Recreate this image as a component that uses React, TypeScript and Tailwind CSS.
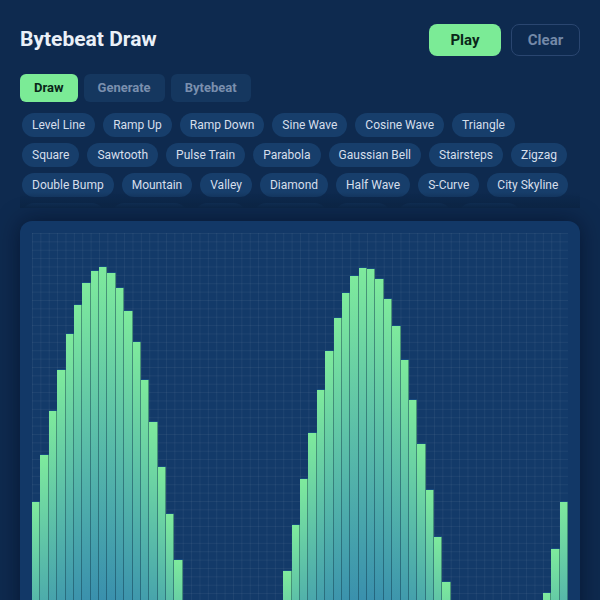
import React from 'react';

const PRESET_ROWS = [
  'Level Line', 'Ramp Up', 'Ramp Down', 'Sine Wave', 'Cosine Wave', 'Triangle',
  'Square', 'Sawtooth', 'Pulse Train', 'Parabola', 'Gaussian Bell', 'Stairsteps', 'Zigzag',
  'Double Bump', 'Mountain', 'Valley', 'Diamond', 'Half Wave', 'S-Curve', 'City Skyline',
  'Exponential', 'Logarithm', 'Noise', 'Heartbeat', 'Spikes', 'Ripple', 'Bounce',
];

const TABS = ['Draw', 'Generate', 'Bytebeat'];

// 64 samples, roughly two periods of a sine
const SAMPLES = Array.from({ length: 64 }, (_, i) => 0.5 + 0.438 * Math.sin((2 * Math.PI * i) / 31.5));

const App = () => {
  const active = 'Draw';

  return (
    <div className="h-screen overflow-hidden bg-[#0e2a4f] px-5 pt-6 font-['Roboto',sans-serif]">
      {/* header */}
      <div className="flex items-center justify-between">
        <h1 className="text-[21px] font-bold text-[#eaf0f8]">Bytebeat Draw</h1>
        <div className="flex gap-2.5">
          <button className="h-8 w-[72px] rounded-lg bg-[#7beb96] text-[15px] font-bold text-[#0a2618]">
            Play
          </button>
          <button className="h-8 w-[69px] rounded-lg border border-[#2a4670] text-[15px] font-bold text-[#7489a8]">
            Clear
          </button>
        </div>
      </div>

      {/* tabs */}
      <div className="mt-[18px] flex gap-1.5">
        {TABS.map((tab) => (
          <button
            key={tab}
            className={
              tab === active
                ? 'h-7 rounded-md bg-[#7beb96] px-[14px] text-[13px] font-bold text-[#0a2618]'
                : 'h-7 rounded-md bg-[#15375f] px-[14px] text-[13px] font-bold text-[#7a8fae]'
            }
          >
            {tab}
          </button>
        ))}
      </div>

      {/* presets */}
      <div className="relative mt-2.5 h-[96px] overflow-hidden">
        <div className="flex flex-wrap gap-x-2 gap-y-1.5 pl-0.5 pt-px">
          {PRESET_ROWS.map((name) => (
            <button
              key={name}
              className="h-6 rounded-full bg-[#173e6b] px-[10px] text-xs text-[#d6dfeb]"
            >
              {name}
            </button>
          ))}
        </div>
        <div className="pointer-events-none absolute inset-x-0 bottom-0 h-4 bg-gradient-to-b from-[#0e2a4f]/0 to-[#0b2444]"></div>
      </div>

      {/* canvas panel */}
      <div className="mt-[13px] rounded-xl bg-[#123867] p-3 shadow-[0_0_22px_rgba(0,8,25,0.55)]">
        <div className="flex h-[536px] items-end bg-[#133a69] bg-[linear-gradient(to_right,rgba(255,255,255,0.05)_1px,transparent_1px),linear-gradient(to_bottom,rgba(255,255,255,0.05)_1px,transparent_1px)] bg-[size:8.375px_8.375px]">
          {SAMPLES.map((v, i) => (
            <div
              key={i}
              className="flex-1 border-r border-t border-[rgba(12,50,70,0.45)] bg-gradient-to-b from-[#7eea9c] to-[#2160ac]"
              style={{ height: `${v * 100}%` }}
            ></div>
          ))}
        </div>
      </div>
    </div>
  );
};

export default App;
